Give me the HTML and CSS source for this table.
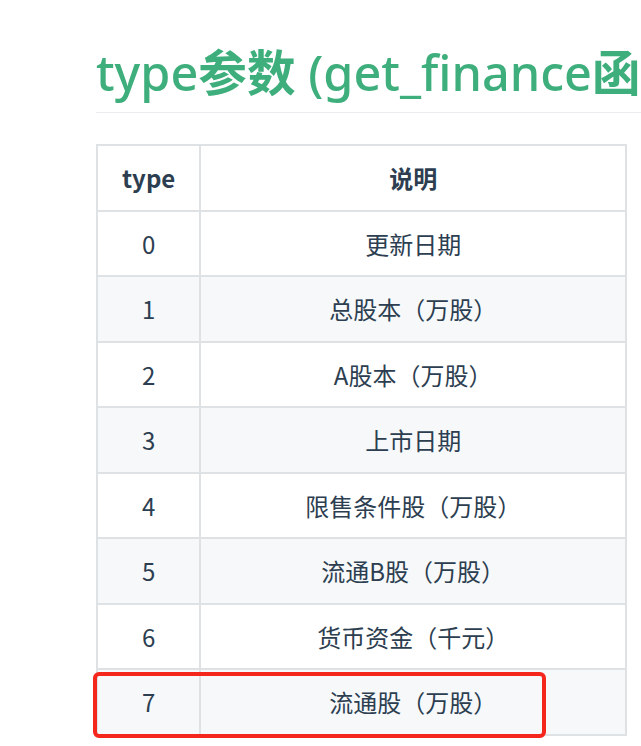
FILE: index.html
```html
<!DOCTYPE html>
<html lang="zh-CN">
<head>
<meta charset="utf-8">
<title>type参数</title>
<link rel="stylesheet" href="styles.css">
</head>
<body>
<div class="content">
  <h2 class="title">type<span class="cjk">参数</span> (get_finance<span class="cjk">函数</span>)</h2>
  <div class="table-wrap">
    <table class="params">
      <thead>
        <tr><th class="col-type">type</th><th>说明</th></tr>
      </thead>
      <tbody>
        <tr><td>0</td><td>更新日期</td></tr>
        <tr><td>1</td><td>总股本（万股）</td></tr>
        <tr><td>2</td><td>A股本（万股）</td></tr>
        <tr><td>3</td><td>上市日期</td></tr>
        <tr><td>4</td><td>限售条件股（万股）</td></tr>
        <tr><td>5</td><td>流通B股（万股）</td></tr>
        <tr><td>6</td><td>货币资金（千元）</td></tr>
        <tr class="marked"><td>7</td><td>流通股（万股）</td></tr>
      </tbody>
    </table>
    <div class="highlight-box"></div>
  </div>
</div>
</body>
</html>
```
FILE: styles.css
```css
html, body {
  margin: 0;
  padding: 0;
  background: #fff;
  overflow: hidden;
}
body {
  width: 641px;
  height: 746px;
  font-family: "Noto Sans CJK TC", "Noto Sans CJK SC", "Noto Sans", sans-serif;
  color: #2c3e50;
}
.content {
  width: 900px;
  padding-left: 96px;
  padding-top: 31px;
}
.title {
  margin: 0;
  font-family: "Noto Sans", "Noto Sans CJK SC", sans-serif;
  font-size: 48.6px;
  font-weight: 500;
  line-height: 78px;
  color: #3eaf7c;
  white-space: nowrap;
  border-bottom: 1px solid #eaecef;
  padding-bottom: 1px;
}
.title .cjk {
  font-family: "Noto Sans CJK SC", sans-serif;
  font-weight: 700;
}
.table-wrap {
  position: relative;
  margin-top: 31px;
  width: 531px;
}
.params {
  border-collapse: collapse;
  width: 531px;
  font-size: 24px;
}
.params th, .params td {
  border: 2px solid #dfe2e5;
  padding: 14px 24px;
  line-height: 35.5px;
  text-align: center;
}
.params th {
  font-weight: 700;
}
.params .col-type {
  width: 53px;
}
.params tbody tr:nth-child(2n) {
  background: #f6f8fa;
}
.highlight-box {
  position: absolute;
  left: -3px;
  bottom: -2px;
  width: 445px;
  height: 58px;
  border: 4px solid #f5261c;
  border-radius: 6px;
}
```
